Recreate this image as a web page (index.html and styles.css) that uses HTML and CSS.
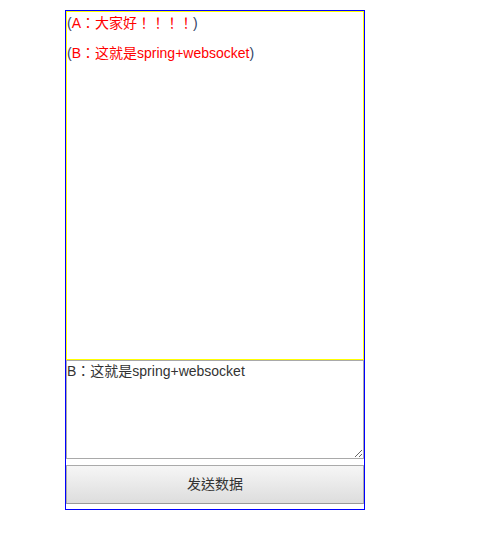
FILE: index.html
```html
<!DOCTYPE html>
<html lang="zh">
<head>
<meta charset="utf-8">
<title>websocket</title>
<link rel="stylesheet" href="styles.css">
</head>
<body>
<div class="chat">
  <div class="messages">
    <p class="msg">(<span class="msg-text">A：大家好！！！！</span>)</p>
    <p class="msg">(<span class="msg-text">B：这就是spring+websocket</span>)</p>
  </div>
  <textarea class="input">B：这就是spring+websocket</textarea>
  <button class="send" type="button">发送数据</button>
</div>
</body>
</html>
```
FILE: styles.css
```css
html, body {
  margin: 0;
  padding: 0;
  background: #ffffff;
}

body {
  font-family: "Liberation Sans", Arial, "Noto Sans CJK TC", sans-serif;
  font-size: 14px;
  line-height: 16px;
  font-feature-settings: "locl" 0;
}

.chat {
  width: 298px;
  height: 498px;
  margin: 10px 0 0 65px;
  border: 1px solid #0000ff;
  display: flex;
  flex-direction: column;
}

.messages {
  height: 344px;
  border: 1px solid #ffff00;
  padding-top: 3px;
  flex: none;
}

.msg {
  margin: 0 0 14px 0;
  color: #334466;
  white-space: nowrap;
}

.msg-text {
  color: #ff0000;
}

.input {
  display: block;
  box-sizing: border-box;
  width: 298px;
  height: 99px;
  margin: 0;
  padding: 2px 0;
  border: 1px solid #a9a9a9;
  font-family: "Liberation Sans", Arial, "Noto Sans CJK TC", sans-serif;
  font-size: 14px;
  line-height: 16px;
  font-feature-settings: "locl" 0;
  color: #333333;
  background: #ffffff;
  flex: none;
}

.send {
  display: block;
  box-sizing: border-box;
  width: 298px;
  height: 39px;
  margin: 6px 0 0 0;
  padding: 0 0 2px 0;
  border: 1px solid #aaaaaa;
  border-bottom-color: #999999;
  border-radius: 0;
  background: linear-gradient(#f6f6f6, #dddddd);
  font-family: "Liberation Sans", Arial, "Noto Sans CJK TC", sans-serif;
  font-size: 14px;
  line-height: 16px;
  font-feature-settings: "locl" 0;
  color: #333333;
  flex: none;
}
```
